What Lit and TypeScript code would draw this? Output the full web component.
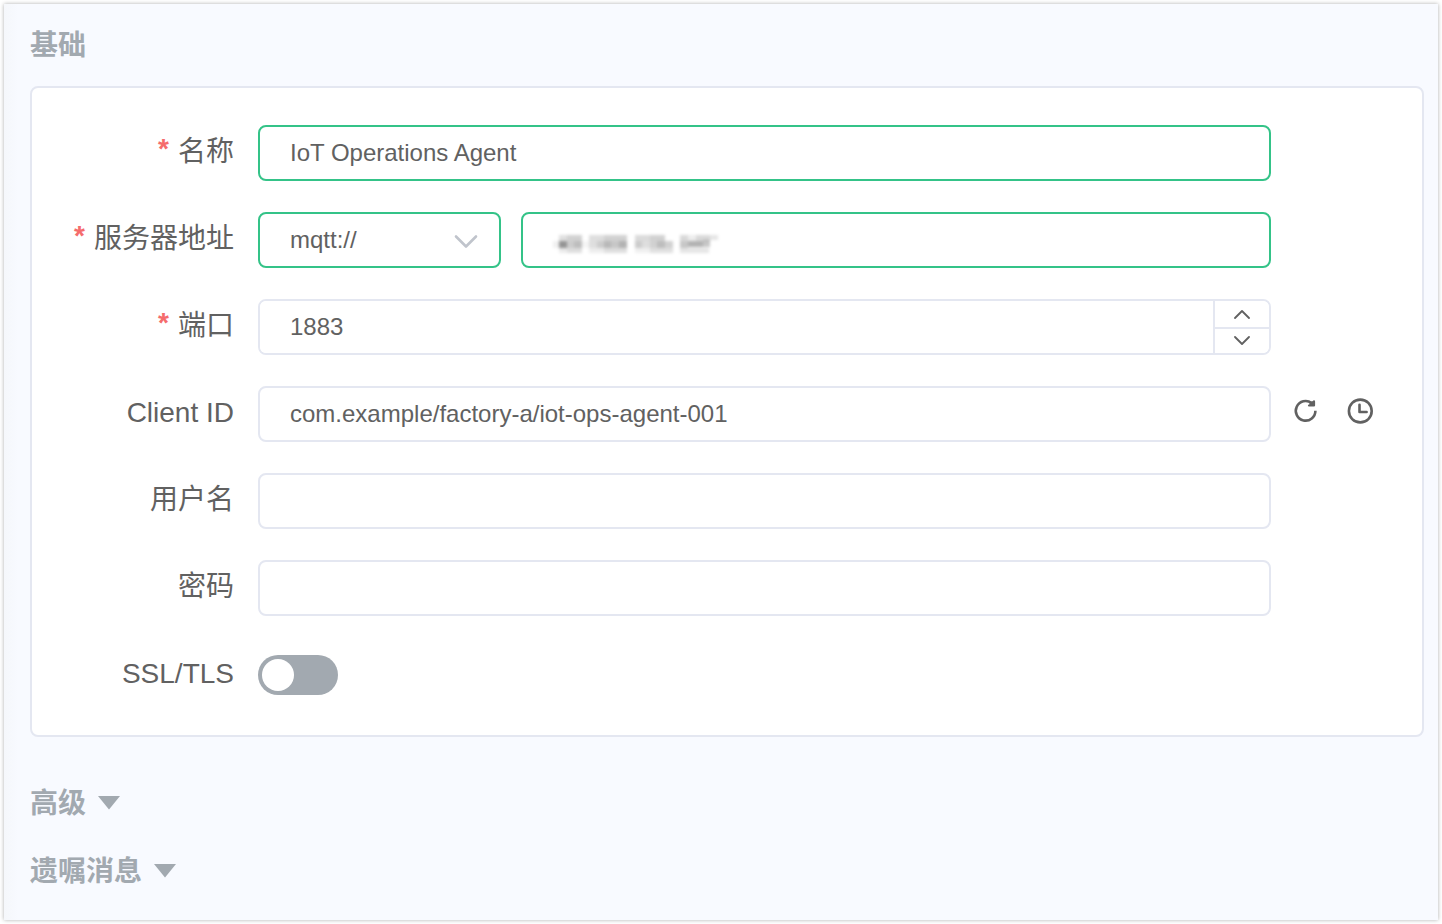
import { LitElement, html, svg, css } from "lit";
import { customElement, state } from "lit/decorators.js";

// Tiles of the masked address: x, y, width, height, darkness
const MASK_TILES: number[][] = [
  [2, 6, 6, 7, 0.06],
  [8, 0, 8, 6, 0.12], [8, 6, 8, 7, 0.42], [8, 13, 8, 5, 0.08],
  [16, 0, 15, 6, 0.18], [16, 6, 7, 7, 0.2], [23, 6, 8, 7, 0.26], [16, 13, 15, 5, 0.13],
  [31, 6, 7, 7, 0.04],
  [38, 0, 15, 6, 0.13], [38, 6, 8, 7, 0.13], [46, 6, 7, 7, 0.2], [38, 13, 15, 5, 0.07],
  [53, 0, 23, 6, 0.18], [53, 6, 7, 7, 0.28], [60, 6, 8, 7, 0.22], [68, 6, 8, 7, 0.3], [53, 13, 23, 5, 0.13],
  [84, 0, 15, 6, 0.14], [84, 6, 7, 7, 0.2], [91, 6, 8, 7, 0.13], [84, 13, 15, 5, 0.06],
  [99, 0, 15, 6, 0.18], [99, 6, 7, 7, 0.18], [106, 6, 8, 7, 0.26], [99, 13, 23, 5, 0.12],
  [114, 6, 8, 7, 0.18],
  [129, 0, 8, 6, 0.15], [129, 6, 8, 7, 0.22], [137, 6, 15, 6, 0.3], [152, 5, 7, 7, 0.22],
  [129, 13, 29, 5, 0.1], [137, 0, 8, 6, 0.07], [145, 0, 14, 6, 0.15], [159, 0, 8, 5, 0.1],
];

@customElement("app-root")
export class AppRoot extends LitElement {
  @state() private advancedOpen = false;
  @state() private willOpen = false;

  static styles = css`
    :host {
      display: block;
      box-sizing: border-box;
      min-height: 100vh;
      padding: 4px;
      background: #fff;
      color: #616161;
      font-family: "Liberation Sans", "Noto Sans CJK SC", sans-serif;
      font-size: 24px;
    }
    *, *::before { box-sizing: border-box; }
    .panel {
      min-height: calc(100vh - 8px);
      padding: 21px 14px 27px 26px;
      background: linear-gradient(90deg, #f5f7fb 0, #f8faff 14px);
      box-shadow: 0 0 4px rgba(0, 0, 0, 0.32);
    }
    .title {
      display: flex;
      align-items: center;
      gap: 12px;
      height: 42px;
      margin: 0;
      padding: 0;
      border: 0;
      background: none;
      color: #a2a9b0;
      font-family: inherit;
      font-size: 28px;
      font-weight: 700;
      line-height: 42px;
    }
    button { cursor: pointer; }
    .card {
      display: flex;
      flex-direction: column;
      gap: 31px;
      margin: 19px 0 46px;
      padding: 37px 0 32px;
      border: 2px solid #e4e7f1;
      border-radius: 8px;
      background: #fff;
    }
    .row {
      display: grid;
      grid-template-columns: 202px minmax(0, 1fr) 127px;
      column-gap: 24px;
      align-items: center;
      min-height: 56px;
    }
    .label {
      padding-bottom: 2px;
      font-size: 28px;
      line-height: 40px;
      text-align: right;
      white-space: nowrap;
    }
    .required::before {
      content: "*";
      margin-right: 9px;
      color: #f56c6c;
      font-weight: 700;
      line-height: 1;
      vertical-align: 3px;
    }
    .field {
      display: block;
      width: 100%;
      height: 56px;
      margin: 0;
      padding: 0 30px;
      border: 2px solid #e4e7f1;
      border-radius: 8px;
      outline: none;
      background: #fff;
      color: #616161;
      font-family: inherit;
      font-size: 24px;
      appearance: none;
    }
    select.field { padding-bottom: 2px; }
    .valid { border-color: #34c388; }
    .address {
      display: grid;
      grid-template-columns: 243px minmax(0, 1fr);
      gap: 20px;
    }
    .wrap { position: relative; }
    .arrow {
      position: absolute;
      top: 22px;
      right: 23px;
      pointer-events: none;
    }
    .mask {
      position: absolute;
      top: 20px;
      left: 30px;
      pointer-events: none;
    }
    .number {
      display: grid;
      grid-template-columns: minmax(0, 1fr) 56px;
      height: 56px;
      border: 2px solid #e4e7f1;
      border-radius: 8px;
      overflow: hidden;
    }
    .number .field {
      height: 52px;
      border: 0;
      border-radius: 0;
      appearance: textfield;
    }
    .field::-webkit-inner-spin-button { appearance: none; margin: 0; }
    .steps {
      display: grid;
      grid-template-rows: 28px 24px;
      border-left: 2px solid #e4e7f1;
    }
    .step {
      display: grid;
      place-items: center;
      padding: 0;
      border: 0;
      background: #fff;
    }
    .up { border-bottom: 2px solid #e4e7f1; }
    .tools {
      display: flex;
      gap: 28px;
      margin-left: -2px;
      padding-bottom: 6px;
    }
    .tool {
      display: grid;
      padding: 0;
      border: 0;
      background: none;
    }
    .switch {
      display: block;
      width: 80px;
      height: 40px;
      margin: 0;
      padding: 4px;
      border-radius: 20px;
      background: #a2a9b0;
      appearance: none;
      cursor: pointer;
    }
    .switch::before {
      content: "";
      display: block;
      width: 32px;
      height: 32px;
      border-radius: 50%;
      background: #fff;
    }
    .switch:checked { padding-left: 44px; background: #34c388; }
    .sections {
      display: flex;
      flex-direction: column;
      align-items: flex-start;
      gap: 26px;
    }
    .open { transform: rotate(180deg); }
  `;

  private step(delta: number) {
    const port = this.renderRoot.querySelector<HTMLInputElement>("#port")!;
    port.value = String(Number(port.value) + delta);
  }

  private caret(open: boolean) {
    return html`<svg class=${open ? "open" : ""} width="22" height="16" viewBox="0 0 22 16" aria-hidden="true">
      <path d="M0 0h22L11 13.5z" fill="#a2a9b0" />
    </svg>`;
  }

  render() {
    return html`
      <main class="panel">
        <h2 class="title">基础</h2>
        <form class="card" @submit=${(e: Event) => e.preventDefault()}>
          <div class="row">
            <label class="label required" for="name">名称</label>
            <input class="field valid" id="name" type="text" value="IoT Operations Agent" />
          </div>
          <div class="row">
            <label class="label required" for="host">服务器地址</label>
            <div class="address">
              <div class="wrap">
                <select class="field valid" aria-label="协议">
                  <option>mqtt://</option>
                  <option>mqtts://</option>
                  <option>ws://</option>
                  <option>wss://</option>
                </select>
                <svg class="arrow" width="24" height="16" viewBox="0 0 24 16" fill="none" aria-hidden="true">
                  <path d="M2 2.5L12 12.5L22 2.5" stroke="#c0c4cc" stroke-width="2.6" stroke-linecap="round" stroke-linejoin="round" />
                </svg>
              </div>
              <div class="wrap">
                <input class="field valid" id="host" type="text" />
                <svg class="mask" width="176" height="26" viewBox="0 -3 176 26" aria-hidden="true">
                  <defs>
                    <filter id="soft" x="-5%" y="-20%" width="110%" height="140%" color-interpolation-filters="sRGB">
                      <feGaussianBlur stdDeviation="1.8" />
                    </filter>
                  </defs>
                  <g filter="url(#soft)">
                    ${MASK_TILES.map(([x, y, w, h, o]) => svg`<rect x=${x} y=${y} width=${w} height=${h} fill="#000" fill-opacity=${o} />`)}
                  </g>
                </svg>
              </div>
            </div>
          </div>
          <div class="row">
            <label class="label required" for="port">端口</label>
            <div class="number">
              <input class="field" id="port" type="number" value="1883" />
              <div class="steps">
                <button class="step up" type="button" aria-label="增加" @click=${() => this.step(1)}>
                  <svg width="16" height="10" viewBox="0 0 16 10" fill="none">
                    <path d="M1 9L8 2L15 9" stroke="#616161" stroke-width="1.8" stroke-linecap="round" stroke-linejoin="round" />
                  </svg>
                </button>
                <button class="step" type="button" aria-label="减少" @click=${() => this.step(-1)}>
                  <svg width="16" height="10" viewBox="0 0 16 10" fill="none">
                    <path d="M1 1L8 8L15 1" stroke="#616161" stroke-width="1.8" stroke-linecap="round" stroke-linejoin="round" />
                  </svg>
                </button>
              </div>
            </div>
          </div>
          <div class="row">
            <label class="label" for="client">Client ID</label>
            <input class="field" id="client" type="text" value="com.example/factory-a/iot-ops-agent-001" />
            <div class="tools">
              <button class="tool" type="button" aria-label="刷新">
                <svg width="26" height="26" viewBox="0 0 26 26" fill="none" stroke="#616161" stroke-width="2.6">
                  <path d="M22.4 12.8A9.8 9.8 0 1 1 18.6 5.1" />
                  <path d="M21 3.4V7.5H16" stroke-width="2.2" stroke-linecap="round" stroke-linejoin="round" />
                  <path d="M17 4L20 3V7.5H16z" fill="#616161" stroke="none" />
                </svg>
              </button>
              <button class="tool" type="button" aria-label="历史">
                <svg width="26" height="26" viewBox="0 0 26 26" fill="none" stroke="#616161" stroke-width="2.6">
                  <circle cx="13.3" cy="13" r="11.4" />
                  <path d="M12.5 6.8V14H19.6" stroke-linecap="round" stroke-linejoin="round" />
                </svg>
              </button>
            </div>
          </div>
          <div class="row">
            <label class="label" for="user">用户名</label>
            <input class="field" id="user" type="text" />
          </div>
          <div class="row">
            <label class="label" for="password">密码</label>
            <input class="field" id="password" type="password" />
          </div>
          <div class="row">
            <label class="label" for="tls">SSL/TLS</label>
            <input class="switch" id="tls" type="checkbox" role="switch" />
          </div>
        </form>
        <div class="sections">
          <button class="title" type="button" aria-expanded=${this.advancedOpen} @click=${() => (this.advancedOpen = !this.advancedOpen)}>
            高级 ${this.caret(this.advancedOpen)}
          </button>
          <button class="title" type="button" aria-expanded=${this.willOpen} @click=${() => (this.willOpen = !this.willOpen)}>
            遗嘱消息 ${this.caret(this.willOpen)}
          </button>
        </div>
      </main>
    `;
  }
}
